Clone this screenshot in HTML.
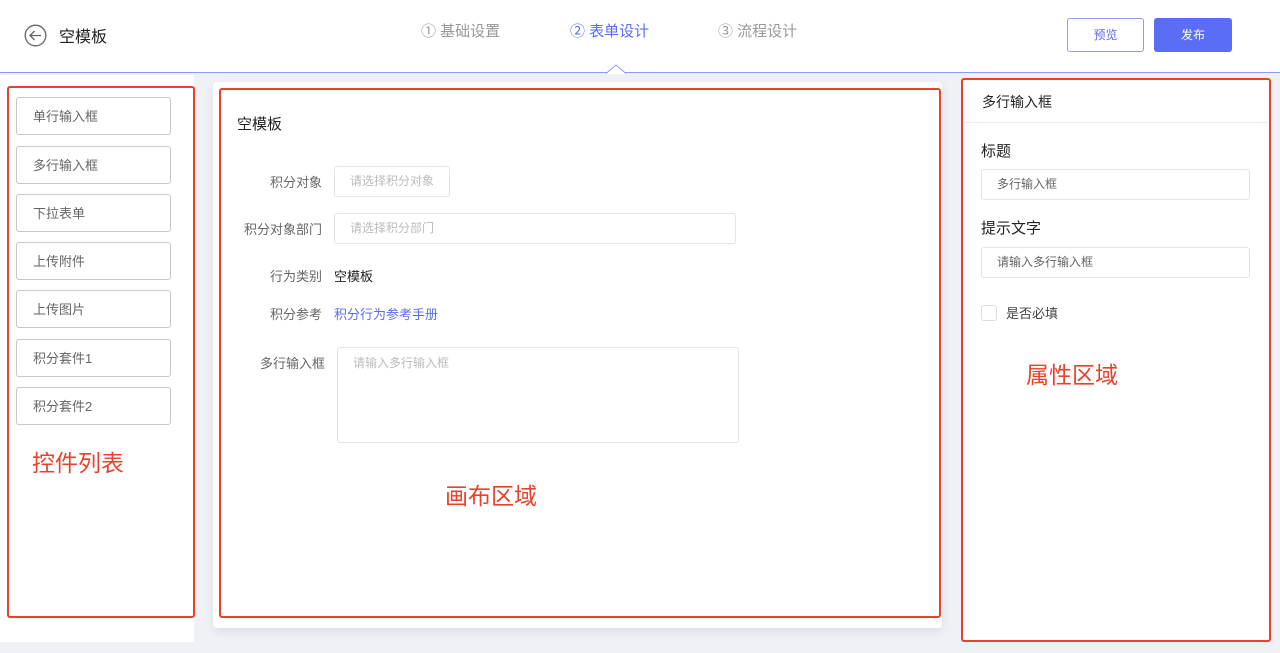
<!DOCTYPE html>
<html><head><meta charset="utf-8"><style>
*{box-sizing:border-box;margin:0;padding:0}
body{width:1280px;height:653px;background:#f0f1f6;position:relative;overflow:hidden;font-family:"Liberation Sans","Noto Sans CJK SC",sans-serif;color:#333}
.a{position:absolute;white-space:nowrap}
.hdr{left:0;top:0;width:1280px;height:73px;background:#fff;border-bottom:1px solid #8e9af4}
.red{position:absolute;border:2px solid #e8412c;border-radius:3px}
.item{position:absolute;left:16px;width:155px;height:38px;border:1px solid #c8c8c8;border-radius:3px;font-size:13px;color:#666;padding-left:16px;line-height:37px;background:#fff}
.ann{color:#e8412c;font-size:23px}
.lbl{font-size:13px;color:#666;text-align:right;width:90px}
.inp{position:absolute;border:1px solid #e3e4ea;border-radius:3px;background:#fff;font-size:12px;color:#bbb;padding-left:15px}
</style></head><body>
<div class="a hdr"></div>
<svg class="a" style="left:24px;top:24px" width="23" height="23" viewBox="0 0 23 23"><circle cx="11.5" cy="11.5" r="10.3" fill="none" stroke="#666" stroke-width="1.3"/><path d="M6 11.5h11M10.5 7l-4.5 4.5 4.5 4.5" fill="none" stroke="#666" stroke-width="1.3"/></svg>
<div class="a" style="left:59px;top:23px;font-size:16px;color:#222">空模板</div>
<div class="a" style="left:421px;top:20px;font-size:15px;color:#999">① 基础设置</div>
<div class="a" style="left:570px;top:20px;font-size:15px;color:#5b6cf5">② 表单设计</div>
<div class="a" style="left:718px;top:20px;font-size:15px;color:#999">③ 流程设计</div>
<svg class="a" style="left:606px;top:64px" width="20" height="10"><path d="M0 9.5L10 1 20 9.5" fill="#fff" stroke="#8e9af4"/><rect x="1" y="9.5" width="18" height="1" fill="#fff"/></svg>
<div class="a" style="left:1067px;top:18px;width:77px;height:34px;border:1px solid #8e9af4;border-radius:3px;font-size:12px;color:#5b6cf5;text-align:center;line-height:32px">预览</div>
<div class="a" style="left:1154px;top:18px;width:78px;height:34px;background:#5b6cf5;border-radius:3px;font-size:12px;color:#fff;text-align:center;line-height:34px">发布</div>

<div class="a" style="left:0;top:75px;width:194px;height:567px;background:#fff"></div>
<div class="red" style="left:7px;top:86px;width:188px;height:532px"></div>
<div class="item" style="top:97px">单行输入框</div>
<div class="item" style="top:146px">多行输入框</div>
<div class="item" style="top:194px">下拉表单</div>
<div class="item" style="top:242px">上传附件</div>
<div class="item" style="top:290px">上传图片</div>
<div class="item" style="top:339px">积分套件1</div>
<div class="item" style="top:387px">积分套件2</div>
<div class="a ann" style="left:32px;top:444px">控件列表</div>

<div class="a" style="left:213px;top:82px;width:729px;height:546px;background:#fff;border-radius:4px;box-shadow:0 4px 10px rgba(0,0,0,.08)"></div>
<div class="red" style="left:219px;top:88px;width:722px;height:530px"></div>
<div class="a" style="left:237px;top:113px;font-size:15px;color:#222">空模板</div>
<div class="a lbl" style="left:232px;top:172px">积分对象</div>
<div class="inp" style="left:334px;top:166px;width:116px;height:31px;line-height:29px">请选择积分对象</div>
<div class="a lbl" style="left:232px;top:219px">积分对象部门</div>
<div class="inp" style="left:334px;top:213px;width:402px;height:31px;line-height:29px">请选择积分部门</div>
<div class="a lbl" style="left:232px;top:266px">行为类别</div>
<div class="a" style="left:334px;top:266px;font-size:13px;color:#222">空模板</div>
<div class="a lbl" style="left:232px;top:304px">积分参考</div>
<div class="a" style="left:334px;top:304px;font-size:13px;color:#5b6cf5">积分行为参考手册</div>
<div class="a lbl" style="left:235px;top:353px">多行输入框</div>
<div class="inp" style="left:337px;top:347px;width:402px;height:96px;padding-top:6px">请输入多行输入框</div>
<div class="a ann" style="left:445px;top:477px">画布区域</div>

<div class="a" style="left:962px;top:78px;width:308px;height:563px;background:#fff"></div>
<div class="a" style="left:964px;top:122px;width:304px;height:1px;background:#eee"></div>
<div class="red" style="left:961px;top:78px;width:310px;height:564px"></div>
<div class="a" style="left:982px;top:92px;font-size:14px;color:#222">多行输入框</div>
<div class="a" style="left:981px;top:140px;font-size:15px;color:#222">标题</div>
<div class="inp" style="left:981px;top:169px;width:269px;height:31px;line-height:29px;color:#666">多行输入框</div>
<div class="a" style="left:981px;top:217px;font-size:15px;color:#222">提示文字</div>
<div class="inp" style="left:981px;top:247px;width:269px;height:31px;line-height:29px;color:#666">请输入多行输入框</div>
<div class="a" style="left:981px;top:305px;width:16px;height:16px;border:1px solid #ddd;border-radius:3px;background:#fff"></div>
<div class="a" style="left:1006px;top:303px;font-size:13px;color:#444">是否必填</div>
<div class="a ann" style="left:1026px;top:356px">属性区域</div>
</body></html>
